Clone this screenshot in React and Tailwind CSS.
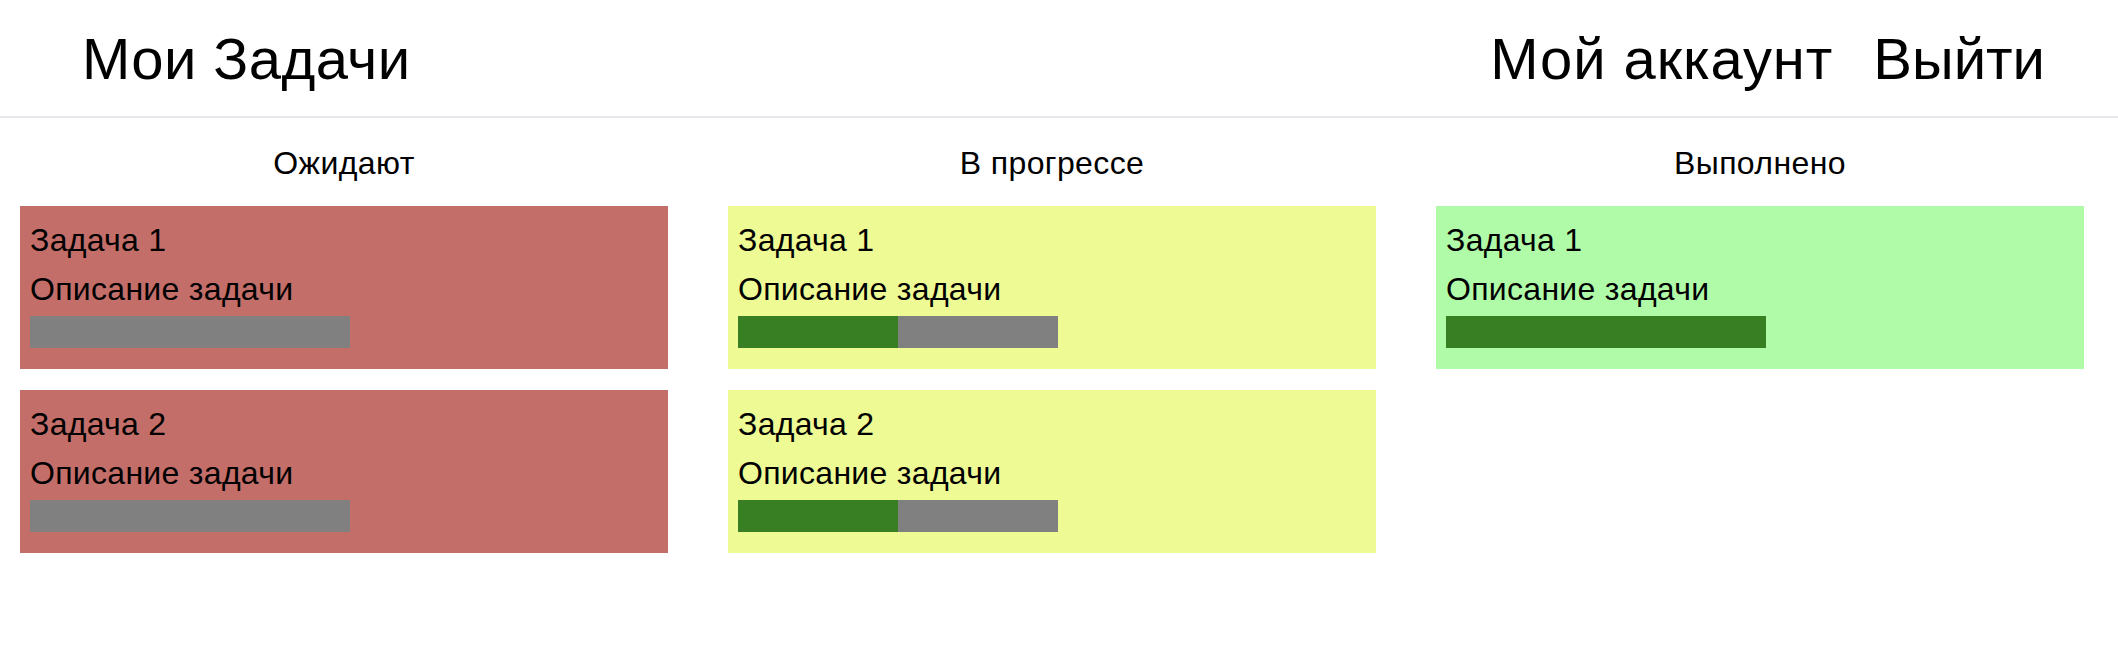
import React from "react";

const columns = [
  {
    title: "Ожидают",
    bg: "bg-[#c46e6a]",
    tasks: [
      { name: "Задача 1", progress: 0 },
      { name: "Задача 2", progress: 0 },
    ],
  },
  {
    title: "В прогрессе",
    bg: "bg-[#eefa94]",
    tasks: [
      { name: "Задача 1", progress: 50 },
      { name: "Задача 2", progress: 50 },
    ],
  },
  {
    title: "Выполнено",
    bg: "bg-[#b0fba8]",
    tasks: [{ name: "Задача 1", progress: 100 }],
  },
];

function Card({ task, bg }) {
  return (
    <div className={`${bg} pt-[16px] pb-[21px] pl-[10px] flex flex-col`}>
      <div className="leading-[37px] text-[32px] tracking-[0.3px] text-black">{task.name}</div>
      <div className="mt-[12px] leading-[37px] text-[32px] tracking-[0.3px] text-black">Описание задачи</div>
      <div className="mt-[8px] w-[320px] h-[32px] bg-[#808080] flex">
        <div className="h-full bg-[#387e22]" style={{ width: `${task.progress}%` }} />
      </div>
    </div>
  );
}

export default function App() {
  return (
    <div
      className="min-h-[670px] bg-white text-black"
      style={{ fontFamily: '"Liberation Sans", Arial, sans-serif' }}
    >
      <header className="h-[118px] border-b-2 border-[#e6e6eb] flex items-center justify-between pl-[82px] pr-[73px]">
        <div className="text-[58px] leading-[67px] tracking-[0.4px]">Мои Задачи</div>
        <nav className="flex items-center gap-[40px] text-[58px] leading-[67px]">
          <span className="tracking-[0.9px]">Мой аккаунт</span>
          <span>Выйти</span>
        </nav>
      </header>
      <main className="pt-[27px] pl-[20px] flex gap-[60px]">
        {columns.map((col) => (
          <section key={col.title} className="w-[648px] flex flex-col">
            <h2 className="text-[32px] leading-[37px] tracking-[0.4px] text-center mb-[24px]">{col.title}</h2>
            <div className="flex flex-col gap-[21px]">
              {col.tasks.map((t, i) => (
                <Card key={i} task={t} bg={col.bg} />
              ))}
            </div>
          </section>
        ))}
      </main>
    </div>
  );
}
